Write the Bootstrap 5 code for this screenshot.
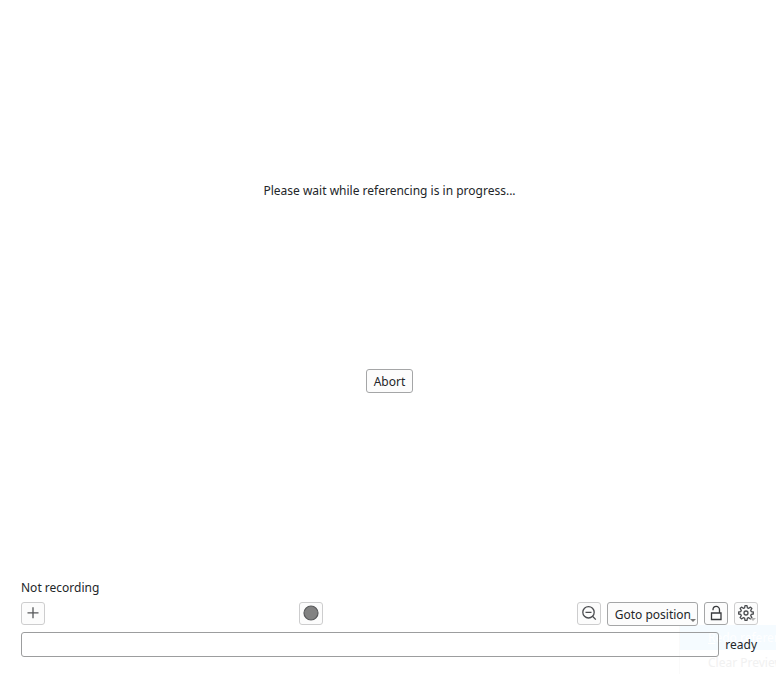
<!DOCTYPE html>
<html lang="en">
<head>
<meta charset="utf-8">
<meta name="viewport" content="width=device-width, initial-scale=1">
<title>Referencing</title>
<link href="https://cdn.jsdelivr.net/npm/bootstrap@5.3.0/dist/css/bootstrap.min.css" rel="stylesheet">
<style>
body{font-family:"Noto Sans",sans-serif;font-size:12px;line-height:20px;color:#232629;background:#fff}
.app-shell{padding:0 18px 17px 21px}
.stage{display:grid;grid-template-rows:181fr auto 167fr auto 185fr;justify-items:center}
.stage p{grid-row:2}
.stage .btn{grid-row:4}
.tool{--bs-btn-padding-x:0;--bs-btn-padding-y:0;--bs-btn-font-size:12px;--bs-btn-line-height:20px;--bs-btn-border-radius:3px;--bs-btn-color:#232629;--bs-btn-bg:#fcfcfc;--bs-btn-border-color:#a5a6a7;--bs-btn-hover-border-color:#3daee9;--bs-btn-hover-bg:#fcfcfc;height:23px;min-width:24px;display:flex;align-items:center;justify-content:center}
.tool-soft{--bs-btn-border-color:#cdcdce}
.tool-text{height:24px;padding:2px 7px 0}
.tool-text.with-arrow{padding-right:6px}
.tool svg{display:block}
.tool-bar{margin:4px 0 6px}
.tool-bar-end{gap:6px}
.with-arrow{position:relative}
.with-arrow::after{content:"";position:absolute;right:1px;bottom:3px;border:3px solid transparent;border-top-color:#777;border-bottom:0}
.tool-soft.with-arrow::after{border-top-color:#b5b5b5}
.status-field{height:25px;padding:2px 6px;font-size:12px;border-color:#9c9d9e;border-radius:3px;background:transparent}
.status-row{gap:6px}
.status-row label{padding-right:1px}
.fading-menu{position:absolute;right:0;bottom:0;width:97px;height:49px;overflow:hidden;pointer-events:none;border-left:1px solid #fafafa;white-space:nowrap;line-height:25px}
.fading-menu div{padding-left:28px;color:#f1f1f1}
.fading-menu .chosen{background:#f5fbff;color:#fff}
</style>
<script src="https://cdn.jsdelivr.net/npm/bootstrap@5.3.0/dist/js/bootstrap.bundle.min.js"></script>
</head>
<body>
<div class="app-shell position-relative min-vh-100 d-flex flex-column overflow-hidden">
  <main class="stage flex-grow-1">
    <p class="mb-0">Please wait while referencing is in progress...</p>
    <button type="button" class="btn tool tool-text">Abort</button>
  </main>
  <div class="fading-menu" aria-hidden="true">
    <div class="chosen"><u>R</u>edo referencing</div>
    <div>Clear Preview</div>
  </div>
  <footer class="position-relative">
    <div>Not recording</div>
    <div class="tool-bar d-flex justify-content-between align-items-start">
      <button type="button" class="btn tool tool-soft" aria-label="Add">
        <svg width="22" height="21" viewBox="0 0 22 21" fill="none" stroke="#555759" stroke-width="1.300"><path d="M11 4.300v11M5.500 9.800h11"/></svg>
      </button>
      <button type="button" class="btn tool tool-soft" aria-label="Record">
        <svg width="22" height="21" viewBox="0 0 22 21"><circle cx="11" cy="10" r="7" fill="#828282" stroke="#58595b" stroke-width="1.200"/></svg>
      </button>
      <div class="tool-bar-end d-flex align-items-start">
        <button type="button" class="btn tool tool-soft" aria-label="Zoom out">
          <svg width="22" height="21" viewBox="0 0 22 21" fill="none" stroke="#4b4d50" stroke-width="1.300"><circle cx="10.500" cy="9.300" r="5.700"/><path d="M7.500 9.300h6M14.500 13.300l3.300 3.300"/></svg>
        </button>
        <button type="button" class="btn tool tool-text with-arrow">Goto position</button>
        <button type="button" class="btn tool" aria-label="Unlock">
          <svg width="22" height="21" viewBox="0 0 22 21" fill="none" stroke="#37393c" stroke-width="1.300"><path d="M6.500 10h9.500v6.500h-9.500zM14.500 10V6.700a3.250 3.250 0 0 0-6.500 0v.6"/></svg>
        </button>
        <button type="button" class="btn tool tool-soft with-arrow" aria-label="Settings">
          <svg width="22" height="21" viewBox="0 0 22 21" fill="none" stroke="#4b4d50" stroke-width="1.300" stroke-linejoin="round"><circle cx="11" cy="10" r="2"/><path d="M10 3.500h2l.4 2.100 1.300.5 1.800-1.200 1.400 1.400-1.200 1.800.5 1.300 2.100.4v2l-2.100.4-.5 1.300 1.200 1.800-1.400 1.400-1.800-1.200-1.300.5-.4 2.100h-2l-.4-2.100-1.300-.5-1.800 1.200-1.400-1.400 1.200-1.800-.5-1.300-2.100-.4v-2l2.100-.4.5-1.300-1.200-1.800 1.400-1.400 1.800 1.200 1.300-.5z" transform="translate(0 -.8)"/></svg>
        </button>
      </div>
    </div>
    <div class="status-row d-flex align-items-center">
      <input type="text" class="form-control status-field" id="status" readonly>
      <label for="status">ready</label>
    </div>
  </footer>
</div>
</body>
</html>
